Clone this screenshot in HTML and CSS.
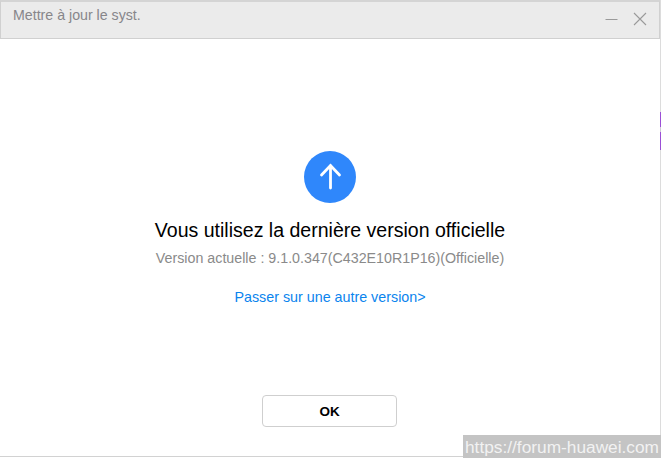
FILE: index.html
```html
<!DOCTYPE html>
<html lang="fr">
<head>
<meta charset="utf-8">
<title>Mettre à jour le syst.</title>
<link rel="stylesheet" href="styles.css">
</head>
<body>
<div class="window">
  <header class="titlebar">
    <span class="title">Mettre à jour le syst.</span>
    <div class="controls">
      <svg class="ctl" width="14" height="14" viewBox="0 0 14 14"><path d="M0.5 7.5H12.5" stroke="#9a9a9a" stroke-width="1" fill="none"/></svg>
      <svg class="ctl" width="14" height="14" viewBox="0 0 14 14"><path d="M1 1L13 13M13 1L1 13" stroke="#9a9a9a" stroke-width="1.1" fill="none"/></svg>
    </div>
  </header>
  <main class="content">
    <svg class="badge" width="52" height="52" viewBox="0 0 52 52">
      <circle cx="26" cy="26" r="26" fill="#2f87fb"/>
      <path d="M26.5 37V14.5M17.5 24L26.5 14.5L35.5 24" stroke="#fff" stroke-width="2.8" stroke-linecap="round" stroke-linejoin="miter" fill="none"/>
    </svg>
    <h1 class="heading">Vous utilisez la dernière version officielle</h1>
    <p class="version">Version actuelle : 9.1.0.347(C432E10R1P16)(Officielle)</p>
    <a class="link" href="#">Passer sur une autre version&gt;</a>
    <button class="ok" type="button">OK</button>
  </main>
</div>
<div class="edge"></div>
<div class="watermark">https://forum-huawei.com</div>
</body>
</html>
```
FILE: styles.css
```css
* { box-sizing: border-box; }
html, body { margin: 0; padding: 0; }
body {
  width: 661px;
  height: 458px;
  overflow: hidden;
  background: #fff;
  font-family: "Liberation Sans", Arial, sans-serif;
  position: relative;
}
.window {
  width: 661px;
  height: 457px;
  display: flex;
  flex-direction: column;
  border-bottom: 1px solid #d2d2d2;
  border-right: 1px solid #dcdcdc;
}
.titlebar {
  height: 39px;
  flex: none;
  display: flex;
  align-items: flex-start;
  justify-content: space-between;
  background: #ebebeb;
  border: 1px solid #d0d0d0;
  border-top: 2px solid #d4d4d4;
  padding: 4px 12px 0 12px;
}
.title {
  font-size: 14.2px;
  line-height: 18px;
  color: #87868a;
}
.controls {
  display: flex;
  gap: 14px;
  margin-top: 6px;
}
.content {
  flex: 1;
  display: flex;
  flex-direction: column;
  align-items: center;
  padding-top: 112px;
}
.badge { display: block; }
.heading {
  margin: 15px 0 0;
  font-size: 19.55px;
  line-height: 24px;
  font-weight: 400;
  color: #000;
}
.version {
  margin: 6px 0 0;
  font-size: 14.25px;
  line-height: 20px;
  color: #8a8a8a;
}
.link {
  margin-top: 19px;
  font-size: 14.3px;
  line-height: 20px;
  color: #0a84ee;
  text-decoration: none;
}
.ok {
  margin-top: 88px;
  width: 135px;
  height: 32px;
  margin-left: -1px;
  background: #fff;
  border: 1px solid #cfcfcf;
  border-radius: 4px;
  font-family: inherit;
  font-size: 13.5px;
  font-weight: 700;
  color: #000;
  padding: 0;
}
.edge {
  position: absolute;
  right: 0;
  top: 112px;
  width: 1px;
  height: 38px;
  background: linear-gradient(#9b4fd6 0 15px, #cfc9d6 15px 20px, #9b4fd6 20px);
}
.watermark {
  position: absolute;
  left: 463px;
  top: 435px;
  width: 198px;
  height: 23px;
  background: #c4c4c4;
  color: #f2f2f2;
  font-family: "Liberation Sans", Arial, sans-serif;
  font-size: 17.3px;
  line-height: 25px;
  padding-left: 2px;
  white-space: nowrap;
  overflow: hidden;
}
```
